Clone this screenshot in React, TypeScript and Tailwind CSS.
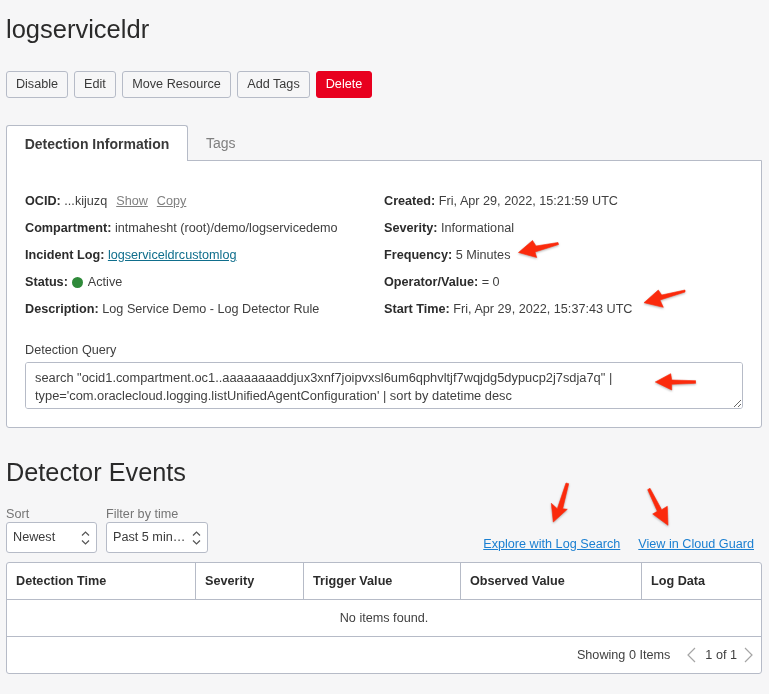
const columns = [
  { name: "Detection Time", width: "w-[189px]" },
  { name: "Severity", width: "w-[108px]" },
  { name: "Trigger Value", width: "w-[157px]" },
  { name: "Observed Value", width: "w-[181px]" },
  { name: "Log Data", width: "flex-1" },
];

function Info({ label, children }: { label: string; children: React.ReactNode }) {
  return (
    <div className="h-[27px] leading-[27px] whitespace-nowrap">
      <span className="font-bold text-[#2c2c2c]">{label}:</span> {children}
    </div>
  );
}

function ActionButton({ children, width }: { children: React.ReactNode; width: string }) {
  return (
    <button className={`${width} h-[27px] rounded-[3px] border border-[#b6bbc7] bg-[#f6f6f7] text-[#3a3a3a]`}>
      {children}
    </button>
  );
}

function SortSelect({ label, value, width }: { label: string; value: string; width: string }) {
  return (
    <div className={width}>
      <div className="h-[16px] leading-[18px] text-[#757575]">{label}</div>
      <div className="mt-[1px] h-[31px] flex items-center justify-between pl-[6px] pr-[6px] bg-white border border-[#b6bbc7] rounded-[3px] text-[#3a3a3a]">
        <span>{value}</span>
        <svg width="9" height="14" viewBox="0 0 9 14" fill="none" stroke="#555" strokeWidth="1.2">
          <path d="M1 4.5 L4.5 1 L8 4.5" />
          <path d="M1 9.5 L4.5 13 L8 9.5" />
        </svg>
      </div>
    </div>
  );
}

export default function App() {
  return (
    <div className="relative w-[769px] h-[694px] overflow-hidden bg-[#f6f6f7] px-[6px] text-[12.65px] text-[#3f3f3f] font-['Liberation_Sans',Arial,sans-serif]">
      <h1 className="pt-[14px] h-[71px] text-[25.5px] leading-[30px] text-[#2a2a2a]">logserviceldr</h1>

      <div className="flex gap-[6px]">
        <ActionButton width="w-[62px]">Disable</ActionButton>
        <ActionButton width="w-[42px]">Edit</ActionButton>
        <ActionButton width="w-[109px]">Move Resource</ActionButton>
        <ActionButton width="w-[73px]">Add Tags</ActionButton>
        <button className="w-[56px] h-[27px] rounded-[3px] border border-[#e8001f] bg-[#e8001f] text-white">Delete</button>
      </div>

      {/* Tabs */}
      <div className="mt-[27px] flex h-[36px] relative z-10">
        <div className="w-[182px] h-[36px] bg-white border border-b-0 border-[#b6bbc7] rounded-t-[3px] text-center text-[14px] leading-[37px] font-bold text-[#3a3a3a]">
          Detection Information
        </div>
        <div className="pl-[18px] text-[14px] leading-[37px] text-[#808080]">Tags</div>
      </div>

      {/* Detail card */}
      <div className="-mt-px w-[756px] h-[268px] bg-white border border-[#b6bbc7] rounded-b-[3px] px-[18px] pt-[27px]">
        <div className="flex">
          <div className="w-[359px]">
            <Info label="OCID">
              ...kijuzq
              <span className="ml-[9px] underline text-[#808080]">Show</span>
              <span className="ml-[9px] underline text-[#808080]">Copy</span>
            </Info>
            <Info label="Compartment">intmahesht (root)/demo/logservicedemo</Info>
            <Info label="Incident Log">
              <span className="underline text-[#0f6e8c]">logserviceldrcustomlog</span>
            </Info>
            <div className="h-[27px] leading-[27px] flex items-center">
              <span className="font-bold text-[#2c2c2c]">Status:</span>
              <span className="ml-[4px] w-[11px] h-[11px] rounded-full bg-[#2f8a3a]"></span>
              <span className="ml-[5px]">Active</span>
            </div>
            <Info label="Description">Log Service Demo - Log Detector Rule</Info>
          </div>
          <div>
            <Info label="Created">Fri, Apr 29, 2022, 15:21:59 UTC</Info>
            <Info label="Severity">Informational</Info>
            <Info label="Frequency">5 Minutes</Info>
            <Info label="Operator/Value">= 0</Info>
            <Info label="Start Time">Fri, Apr 29, 2022, 15:37:43 UTC</Info>
          </div>
        </div>

        <div className="mt-[19px] h-[16px] leading-[16px]">Detection Query</div>
        <textarea
          readOnly
          className="mt-[4px] block w-[718px] h-[47px] px-[9px] py-[6px] bg-white border border-[#b6bbc7] rounded-[3px] text-[12.85px] leading-[18px] text-[#3f3f3f] outline-none"
          value={`search "ocid1.compartment.oc1..aaaaaaaaddjux3xnf7joipvxsl6um6qphvltjf7wqjdg5dypucp2j7sdja7q" | type='com.oraclecloud.logging.listUnifiedAgentConfiguration' | sort by datetime desc`}
        />
      </div>

      <h2 className="mt-[29px] h-[30px] text-[25.3px] leading-[30px] text-[#2a2a2a]">Detector Events</h2>

      <div className="mt-[18px] flex items-end h-[48px]">
        <div className="flex gap-[9px]">
          <SortSelect label="Sort" value="Newest" width="w-[91px]" />
          <SortSelect label="Filter by time" value="Past 5 min…" width="w-[102px]" />
        </div>
        <div className="ml-auto mr-[9px] -mb-px flex gap-[18px] text-[#1a7fd1] underline">
          <span>Explore with Log Search</span>
          <span>View in Cloud Guard</span>
        </div>
      </div>

      {/* Events table */}
      <div className="mt-[9px] w-[756px] bg-white border border-[#b6bbc7] rounded-[3px]">
        <div className="flex h-[37px] border-b border-[#b6bbc7]">
          {columns.map((col) => (
            <div
              key={col.name}
              className={`${col.width} px-[9px] leading-[36px] font-bold text-[#2c2c2c] border-r border-[#b6bbc7] last:border-r-0`}
            >
              {col.name}
            </div>
          ))}
        </div>
        <div className="h-[37px] leading-[36px] text-center border-b border-[#b6bbc7]">No items found.</div>
        <div className="h-[36px] flex items-center justify-end pr-[8px]">
          <span>Showing 0 Items</span>
          <svg className="ml-[17px]" width="9" height="16" viewBox="0 0 9 16" fill="none" stroke="#a5a5a5" strokeWidth="1.2">
            <path d="M8 1 L1 8 L8 15" />
          </svg>
          <span className="ml-[9px]">1 of 1</span>
          <svg className="ml-[7px]" width="9" height="16" viewBox="0 0 9 16" fill="none" stroke="#a5a5a5" strokeWidth="1.2">
            <path d="M1 1 L8 8 L1 15" />
          </svg>
        </div>
      </div>

      {/* Annotation arrows drawn on top of the screenshot */}
      <svg className="absolute left-0 top-0 pointer-events-none" width="769" height="694" viewBox="0 0 769 694">
        <g
          fill="#fb2a0c"
          stroke="#fb2a0c"
          strokeWidth="0.6"
          strokeLinejoin="round"
          style={{ filter: "drop-shadow(0px 1px 1px rgba(0,0,0,0.3))" }}
        >
          <polygon points="518.5,252.5 532.5,240.5 536,246 558,242.5 558.5,244.5 535,252 536.7,257.5" />
          <polygon points="644,302.7 658.3,290 661.7,295 685,290 685,292 660,300 663.3,307.3" />
          <polygon points="655.3,382 670.7,373.7 671.7,380 695.7,380.7 695.7,383.3 671.7,384.3 671.7,390" />
          <polygon points="553.3,522 551.3,503.3 557.3,508.7 566,483 568.7,483.7 562.7,508.7 567.3,509.3" />
          <polygon points="668,525.3 652.7,514 657.3,511.3 647.7,489.7 650,488.3 661.7,509.7 667.3,506.3" />
        </g>
      </svg>
    </div>
  );
}
